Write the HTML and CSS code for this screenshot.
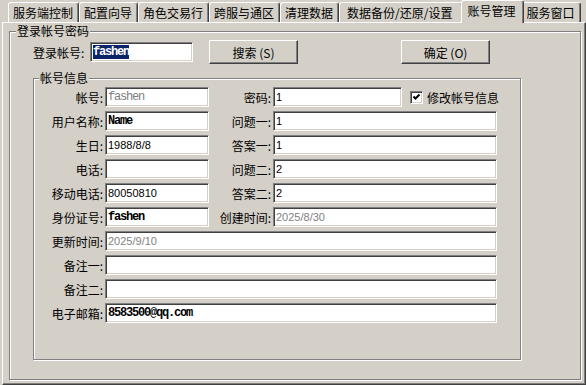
FILE: index.html
```html
<!DOCTYPE html>
<html lang="zh-CN">
<head>
<meta charset="UTF-8">
<title>账号管理</title>
<link rel="stylesheet" href="styles.css">
</head>
<body>
<div class="tabs">
  <div class="tab">服务端控制</div>
  <div class="tab">配置向导</div>
  <div class="tab">角色交易行</div>
  <div class="tab">跨服与通区</div>
  <div class="tab">清理数据</div>
  <div class="tab tab-wide">数据备份/还原/设置</div>
  <div class="tab on">账号管理</div>
  <div class="tab">服务窗口</div>
</div>
<div class="panel">
  <fieldset class="grp grp-login">
    <legend>登录帐号密码</legend>
    <div class="login-row">
      <span class="login-lab">登录帐号:</span>
      <div class="fld fld-login mono"><span class="sel">fashen</span></div>
      <button class="btn btn-search">搜索 (S)</button>
      <button class="btn btn-ok">确定 (O)</button>
    </div>
    <fieldset class="grp grp-info">
      <legend>帐号信息</legend>
      <div class="rows">
        <div class="row">
          <span class="lab">帐号:</span>
          <div class="fld w-s mono thin off">fashen</div>
          <span class="lab lab2">密码:</span>
          <div class="fld w-m">1</div>
          <span class="chk"><svg width="11" height="11" viewBox="0 0 11 11"><path d="M2.5 4.5 L4.5 6.5 L8.5 2.5" fill="none" stroke="#000" stroke-width="2"/></svg></span>
          <span class="chk-text">修改帐号信息</span>
        </div>
        <div class="row">
          <span class="lab">用户名称:</span>
          <div class="fld w-s mono">Name</div>
          <span class="lab lab2">问题一:</span>
          <div class="fld w-l">1</div>
        </div>
        <div class="row">
          <span class="lab">生日:</span>
          <div class="fld w-s">1988/8/8</div>
          <span class="lab lab2">答案一:</span>
          <div class="fld w-l">1</div>
        </div>
        <div class="row">
          <span class="lab">电话:</span>
          <div class="fld w-s"></div>
          <span class="lab lab2">问题二:</span>
          <div class="fld w-l">2</div>
        </div>
        <div class="row">
          <span class="lab">移动电话:</span>
          <div class="fld w-s">80050810</div>
          <span class="lab lab2">答案二:</span>
          <div class="fld w-l">2</div>
        </div>
        <div class="row">
          <span class="lab">身份证号:</span>
          <div class="fld w-s mono">fashen</div>
          <span class="lab lab2">创建时间:</span>
          <div class="fld w-l off">2025/8/30</div>
        </div>
        <div class="row">
          <span class="lab">更新时间:</span>
          <div class="fld w-xl off">2025/9/10</div>
        </div>
        <div class="row">
          <span class="lab">备注一:</span>
          <div class="fld w-xl"></div>
        </div>
        <div class="row">
          <span class="lab">备注二:</span>
          <div class="fld w-xl"></div>
        </div>
        <div class="row">
          <span class="lab">电子邮箱:</span>
          <div class="fld w-xl mono">8583500@qq.com</div>
        </div>
      </div>
    </fieldset>
  </fieldset>
</div>
</body>
</html>
```

FILE: styles.css
```css
* {
    box-sizing: border-box;
}
html, body {
    margin: 0;
}
body {
    width: 586px;
    height: 385px;
    overflow: hidden;
    background: #d4d0c8;
    color: #000;
    font-family: "Noto Sans CJK SC", sans-serif;
    font-size: 12px;
}

/* tab strip */
.tabs {
    display: flex;
    align-items: flex-end;
    height: 22px;
    padding-left: 8px;
}
.tab {
    height: 20px;
    line-height: 19px;
    padding: 0 5px 0 4px;
    border: 1px solid #fff;
    border-right-color: #404040;
    border-bottom: 0;
    border-radius: 3px 3px 0 0;
    box-shadow: inset -1px 0 #808080;
    white-space: nowrap;
}
.tab-wide {
    padding: 0 9px 0 7px;
}
.tab.on {
    position: relative;
    z-index: 1;
    height: 23px;
    margin: 0 -2px -1px;
    padding: 0 7px 0 6px;
    background: #d4d0c8;
}

.panel {
    margin-left: 2px;
    height: 363px;
    padding: 1px 0 0 6px;
    border: 1px solid;
    border-color: #fff #404040 #404040 #fff;
    box-shadow: inset -1px -1px #808080;
}

/* group boxes */
.grp {
    margin: 0;
    padding: 0;
    min-width: 0;
    border: 1px solid #808080;
    box-shadow: inset 1px 1px #fff, 1px 1px #fff;
}
.grp > legend {
    padding: 0 1px;
    line-height: 14px;
    background: #d4d0c8;
}
.grp-login {
    width: 572px;
    height: 356px;
}
.grp-login > legend {
    margin-left: 6px;
}
.grp-info {
    width: 488px;
    height: 289px;
    margin: 7px 0 0 23px;
}
.grp-info > legend {
    margin-left: 5px;
}

.login-row {
    display: flex;
    align-items: center;
    height: 24px;
    margin: 2px 0 0 23px;
}
.login-lab {
    width: 57px;
}
.fld-login {
    width: 103px;
}

.btn {
    width: 89px;
    height: 24px;
    margin-left: 16px;
    padding: 0;
    background: #d4d0c8;
    border: 1px solid;
    border-color: #fff #404040 #404040 #fff;
    box-shadow: inset -1px -1px #808080;
    font-family: "Noto Sans CJK SC", sans-serif;
    font-size: 12px;
    color: #000;
}
.btn-ok {
    margin-left: 103px;
}

/* fields */
.rows {
    display: flex;
    flex-direction: column;
    gap: 4px;
    margin-top: 2px;
}
.row {
    display: flex;
    align-items: center;
    height: 20px;
}
.lab {
    width: 71px;
    padding-right: 2px;
    text-align: right;
    white-space: nowrap;
}
.lab2 {
    width: 64px;
}
.fld {
    height: 20px;
    padding: 0 2px;
    background: #fff;
    border: 1px solid;
    border-color: #808080 #fff #fff #808080;
    box-shadow: inset 1px 1px #404040, inset -1px -1px #d4d0c8;
    font-family: "Liberation Sans", sans-serif;
    font-size: 11px;
    line-height: 18px;
    white-space: nowrap;
    overflow: hidden;
}
.w-s { width: 104px; }
.w-m { width: 129px; }
.w-l { width: 224px; }
.w-xl { width: 392px; }

.mono {
    font-family: "Liberation Mono", monospace;
    font-size: 12px;
    font-weight: bold;
    letter-spacing: -1.2px;
}
.thin {
    font-weight: normal;
}
.off {
    color: #808080;
}
.sel {
    background: #0a246a;
    color: #fff;
}

.chk {
    width: 13px;
    height: 13px;
    margin-left: 8px;
    background: #fff;
    border: 1px solid;
    border-color: #808080 #fff #fff #808080;
    box-shadow: inset 1px 1px #404040, inset -1px -1px #d4d0c8;
}
.chk svg {
    display: block;
}
.chk-text {
    margin-left: 4px;
}
```
